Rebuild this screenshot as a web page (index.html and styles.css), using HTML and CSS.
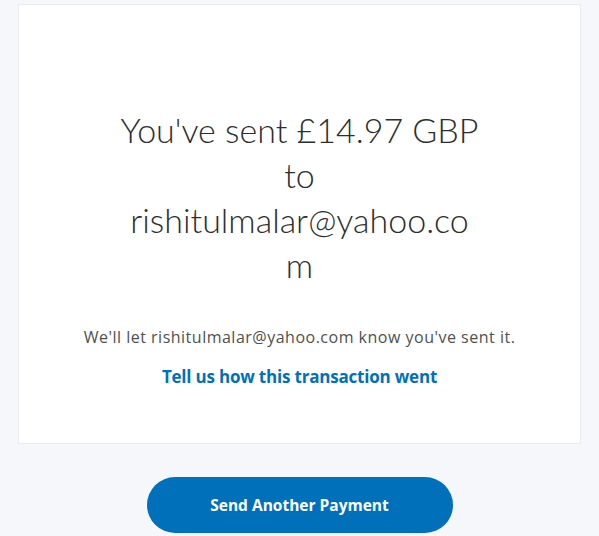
FILE: index.html
```html
<!DOCTYPE html>
<html lang="en">
<head>
    <meta charset="UTF-8">
    <meta name="viewport" content="width=device-width, initial-scale=1.0">
    <title>Payment sent</title>
    <link rel="stylesheet" href="styles.css">
</head>
<body>
    <!-- Tarjeta de confirmación -->
    <div class="card">
        <h1 class="title">You've sent £14.97 GBP to rishitulmalar@yahoo.com</h1>
        <p class="note">We'll let rishitulmalar@yahoo.com know you've sent it.</p>
        <a class="feedback" href="#">Tell us how this transaction went</a>
    </div>

    <!-- Botón -->
    <div class="button-container">
        <button class="button">Send Another Payment</button>
    </div>
</body>
</html>
```

FILE: styles.css
```css
body {
    margin: 0;
    padding: 4px 18px 0 18px;
    background: #f5f7fa;
    font-family: "Open Sans", Arial, sans-serif;
}

.card {
    background: #ffffff;
    border: 1px solid #eaeced;
    height: 440px;
    box-sizing: border-box;
    display: flex;
    flex-direction: column;
    align-items: center;
    padding-top: 102px;
}

.title {
    width: 360px;
    margin: 0;
    font-family: Lato, "Noto Sans", sans-serif;
    font-weight: 300;
    font-size: 34px;
    line-height: 45px;
    color: #2c2e2f;
    text-align: center;
    overflow-wrap: anywhere;
}

.note {
    margin: 39px 0 0 0;
    font-size: 16px;
    letter-spacing: 0.5px;
    color: #505050;
    text-align: center;
}

.feedback {
    margin-top: 17px;
    font-size: 17px;
    letter-spacing: -0.2px;
    font-weight: 700;
    color: #0070ba;
    text-decoration: none;
}

.button-container {
    display: flex;
    justify-content: center;
    padding-top: 33px;
}

.button {
    width: 306px;
    height: 56px;
    border: none;
    border-radius: 28px;
    background: #0070ba;
    color: #ffffff;
    font-family: "Open Sans", Arial, sans-serif;
    font-size: 15.5px;
    font-weight: 700;
    cursor: pointer;
}
```
